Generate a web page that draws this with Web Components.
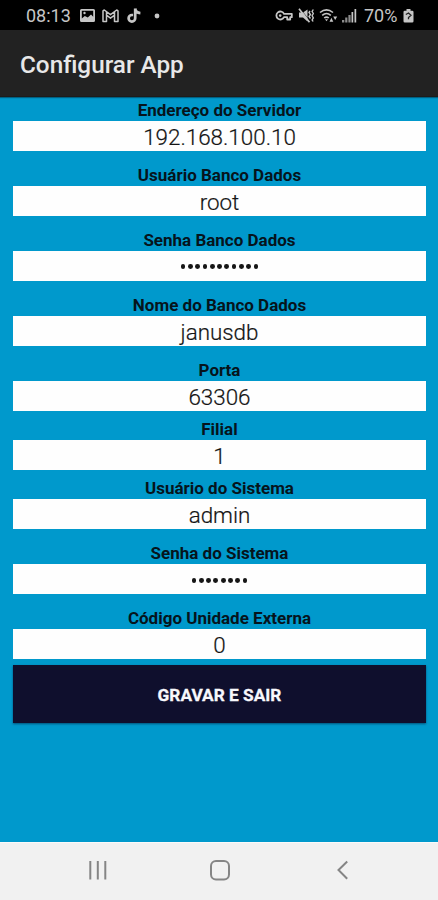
<!DOCTYPE html>
<html lang="pt-BR">
<head>
<meta charset="utf-8">
<title>Configurar App</title>
<style>
  body {
    margin: 0;
    font-family: Roboto, "Noto Sans", sans-serif;
  }
</style>
</head>
<body>
<config-screen></config-screen>

<script>
class StatusBar extends HTMLElement {
  constructor() {
    super();
    this.attachShadow({ mode: "open" });
  }

  connectedCallback() {
    this.render();
  }

  render() {
    this.shadowRoot.innerHTML = `
      <style>
        :host {
          display: flex;
          justify-content: space-between;
          align-items: center;
          box-sizing: border-box;
          height: 30px;
          padding: 1px 24px 0 26px;
          background: #000;
          color: #c6c6c6;
          font-size: 18px;
          line-height: 30px;
        }
        .group {
          display: flex;
          align-items: center;
        }
        .time {
          width: 46px;
          margin-right: 7px;
        }
        .percent {
          width: 34px;
          margin-left: 7px;
          margin-right: 5px;
          white-space: nowrap;
        }
        svg {
          display: block;
          flex: none;
        }
      </style>
      <div class="group">
        <span class="time">08:13</span>
        <svg width="17" height="16" viewBox="0 0 17 16">
          <path fill="currentColor" fill-rule="evenodd" d="M2.500 1h12A1.500 1.500 0 0 1 16 2.500v10a1.500 1.500 0 0 1-1.500 1.500h-12A1.500 1.500 0 0 1 1 12.500v-10A1.500 1.500 0 0 1 2.500 1zM2.800 2.800v7.700l3-2.500 3 1.500L12 6.500l2.200 2.200V2.800z"/>
          <circle cx="5.500" cy="5" r="1.200" fill="currentColor"/>
        </svg>
        <svg width="17" height="16" viewBox="0 0 17 16" style="margin-left:6px">
          <path fill="none" stroke="currentColor" stroke-width="1.500" stroke-linejoin="round" d="M1 13.500V2.800L2.300 2l6.200 4.700L14.700 2l1.300.8v10.700h-3.500V7.200l-4 3-4-3v6.300zM4.500 7.200V3.700M12.500 7.200V3.700"/>
        </svg>
        <svg width="15" height="16" viewBox="0 0 15 16" style="margin-left:8px">
          <path fill="none" stroke="currentColor" stroke-width="2.700" d="M8.200 .5v9.800a3.300 3.300 0 1 1-3.300-3.300h1.200M8.200 .5c.3 2.900 2 4.400 5.200 4.600"/>
        </svg>
        <svg width="6" height="6" viewBox="0 0 6 6" style="margin-left:12px">
          <circle cx="3" cy="3" r="2.400" fill="currentColor"/>
        </svg>
      </div>
      <div class="group">
        <svg width="18" height="14" viewBox="0 0 18 14">
          <path fill="none" stroke="currentColor" stroke-width="1.800" stroke-linejoin="round" d="M9 4.800h7.800v3.400h-1.600v2.300h-3V8.200H9a4 4 0 1 1 0-3.400z"/>
          <circle cx="5.200" cy="6.600" r="1.300" fill="currentColor"/>
        </svg>
        <svg width="17" height="16" viewBox="0 0 17 16" style="margin-left:5px">
          <path fill="currentColor" d="M1 4.500h4l4.500-3v12l-4.500-4H1z"/>
          <path stroke="#000" stroke-width=".6" d="M2.400 1l10 12.500"/>
          <path stroke="currentColor" stroke-width="1.700" d="M1 .8l10.500 13.500"/>
          <path fill="none" stroke="currentColor" stroke-width="1.400" d="M12 3l-1 1.500 1.500 2-1.500 2 1.500 2M15.300 1.500l-1.200 2 1.200 2-1.200 2.200 1.200 2.200-1.200 2 1 1.600"/>
        </svg>
        <svg width="19" height="16" viewBox="0 0 19 16" style="margin-left:4px">
          <g fill="none" stroke="currentColor" stroke-width="1.600">
            <path d="M1 4.500c4-3.300 9-3.300 13 0M3.200 7.300c2.700-2.200 5.900-2.200 8.600 0M5.200 10c1.500-1.200 3.100-1.200 4.600 0"/>
          </g>
          <path fill="currentColor" d="M6 11.300h3l-1.500 1.900zM10.500 13.800l1.900-4 1.900 4zM14.200 8.500h4l-2 3.600z"/>
        </svg>
        <svg width="16" height="16" viewBox="0 0 16 16" style="margin-left:3px">
          <g fill="currentColor">
            <path opacity=".7" d="M1 12h2.300v2.500H1zM4.200 9.500h2.200v5H4.200zM7.400 7h2.200v7.500H7.400z"/>
            <path d="M10.500 4h1.700v10.500h-1.700zM13.500 1h1.700v13.500h-1.700z"/>
          </g>
        </svg>
        <span class="percent">70%</span>
        <svg width="11" height="16" viewBox="0 0 11 16">
          <path fill="currentColor" d="M3.500 1h4v1.800h1.700a1.300 1.300 0 0 1 1.300 1.300v9.100a1.300 1.300 0 0 1-1.300 1.300H1.800A1.300 1.300 0 0 1 .5 13.200V4.100a1.300 1.300 0 0 1 1.300-1.300h1.700z"/>
          <path fill="none" stroke="#222" stroke-width="1.300" d="M2.800 6.500 5.500 5 8 7.300 5.500 9.500v1.700"/>
        </svg>
      </div>
    `;
  }
}

class AppHeader extends HTMLElement {
  constructor() {
    super();
    this.attachShadow({ mode: "open" });
  }

  connectedCallback() {
    this.shadowRoot.innerHTML = `
      <style>
        :host {
          display: flex;
          align-items: center;
          box-sizing: border-box;
          height: 67px;
          padding: 3px 20px 0;
          background: #222;
          color: #e8e8e8;
          border-bottom: 1px solid #1c1c1c;
          box-shadow: 0 1px 1px rgb(0 30 45 / 45%);
          font-size: 24.3px;
          font-weight: 500;
        }
      </style>
      <span><slot></slot></span>
    `;
  }
}

class ConfigField extends HTMLElement {
  constructor() {
    super();
    this.attachShadow({ mode: "open" });
  }

  connectedCallback() {
    this.render();
  }

  render() {
    const value = this.getAttribute("value");
    const secret = this.hasAttribute("secret");

    this.shadowRoot.innerHTML = `
      <style>
        :host {
          display: block;
          text-align: center;
        }
        .label {
          height: 20px;
          color: #06141c;
          font-size: 17px;
          font-weight: 700;
          line-height: 18px;
        }
        .value {
          height: 30.5px;
          background: #fefefe;
          color: #141414;
          font-size: 22.4px;
          font-weight: 300;
          line-height: 33px;
          -webkit-text-stroke: 0.2px #141414;
        }
        .dots {
          display: flex;
          justify-content: center;
          align-items: center;
          gap: 2.5px;
          padding-top: 2px;
          height: 28.5px;
        }
        .dots i {
          width: 4.8px;
          height: 4.8px;
          border-radius: 50%;
          background: #161616;
        }
      </style>
      <div class="label"><slot></slot></div>
      ${secret
        ? `<div class="value dots">${"<i></i>".repeat(Number(value))}</div>`
        : `<div class="value">${value}</div>`}
    `;
  }
}

class SaveButton extends HTMLElement {
  constructor() {
    super();
    this.attachShadow({ mode: "open" });
  }

  connectedCallback() {
    this.shadowRoot.innerHTML = `
      <style>
        :host {
          display: block;
        }
        button {
          display: block;
          width: 100%;
          height: 58px;
          padding: 2px 0 0;
          border: 0;
          background: #0f0f2d;
          color: #f8f8fc;
          box-shadow: 0 1px 2px rgb(0 20 50 / 55%);
          font-family: inherit;
          font-size: 17.3px;
          font-weight: 700;
          -webkit-text-stroke: 0.3px #f8f8fc;
        }
      </style>
      <button type="button"><slot></slot></button>
    `;
  }
}

class NavBar extends HTMLElement {
  constructor() {
    super();
    this.attachShadow({ mode: "open" });
  }

  connectedCallback() {
    this.shadowRoot.innerHTML = `
      <style>
        :host {
          display: flex;
          justify-content: space-between;
          align-items: center;
          box-sizing: border-box;
          height: 58px;
          padding: 0 84px 3px 86px;
          border-top: 1px solid #fafafa;
          background: #f1f1f1;
        }
        svg {
          display: block;
          fill: none;
          stroke: #858585;
          stroke-width: 2;
        }
      </style>
      <svg width="24" height="24" viewBox="0 0 24 24"><path d="M4.300 3v18.500M11.800 3v18.500M19.300 3v18.500"/></svg>
      <svg width="24" height="24" viewBox="0 0 24 24"><rect x="3" y="3" width="18" height="18.500" rx="5"/></svg>
      <svg width="24" height="24" viewBox="0 0 24 24"><path d="M17.200 3.500 8.500 12l8.700 8.700"/></svg>
    `;
  }
}

class ConfigScreen extends HTMLElement {
  constructor() {
    super();
    this.attachShadow({ mode: "open" });
  }

  connectedCallback() {
    this.shadowRoot.innerHTML = `
      <style>
        :host {
          display: flex;
          flex-direction: column;
          height: 900px;
          overflow: hidden;
          background: #0099cc;
        }
        app-header {
          flex: none;
        }
        main {
          flex: 1;
          padding: 3.5px 12px 0 13px;
        }
        config-field {
          margin-bottom: 14.5px;
        }
        .tight {
          margin-bottom: 8.7px;
        }
        .last {
          margin-bottom: 5.5px;
        }
      </style>
      <status-bar></status-bar>
      <app-header>Configurar App</app-header>
      <main>
        <config-field value="192.168.100.10">Endereço do Servidor</config-field>
        <config-field value="root">Usuário Banco Dados</config-field>
        <config-field value="11" secret>Senha Banco Dados</config-field>
        <config-field value="janusdb">Nome do Banco Dados</config-field>
        <config-field class="tight" value="63306">Porta</config-field>
        <config-field class="tight" value="1">Filial</config-field>
        <config-field value="admin">Usuário do Sistema</config-field>
        <config-field value="8" secret>Senha do Sistema</config-field>
        <config-field class="last" value="0">Código Unidade Externa</config-field>
        <save-button>GRAVAR E SAIR</save-button>
      </main>
      <nav-bar></nav-bar>
    `;
  }
}

customElements.define("status-bar", StatusBar);
customElements.define("app-header", AppHeader);
customElements.define("config-field", ConfigField);
customElements.define("save-button", SaveButton);
customElements.define("nav-bar", NavBar);
customElements.define("config-screen", ConfigScreen);
</script>
</body>
</html>
